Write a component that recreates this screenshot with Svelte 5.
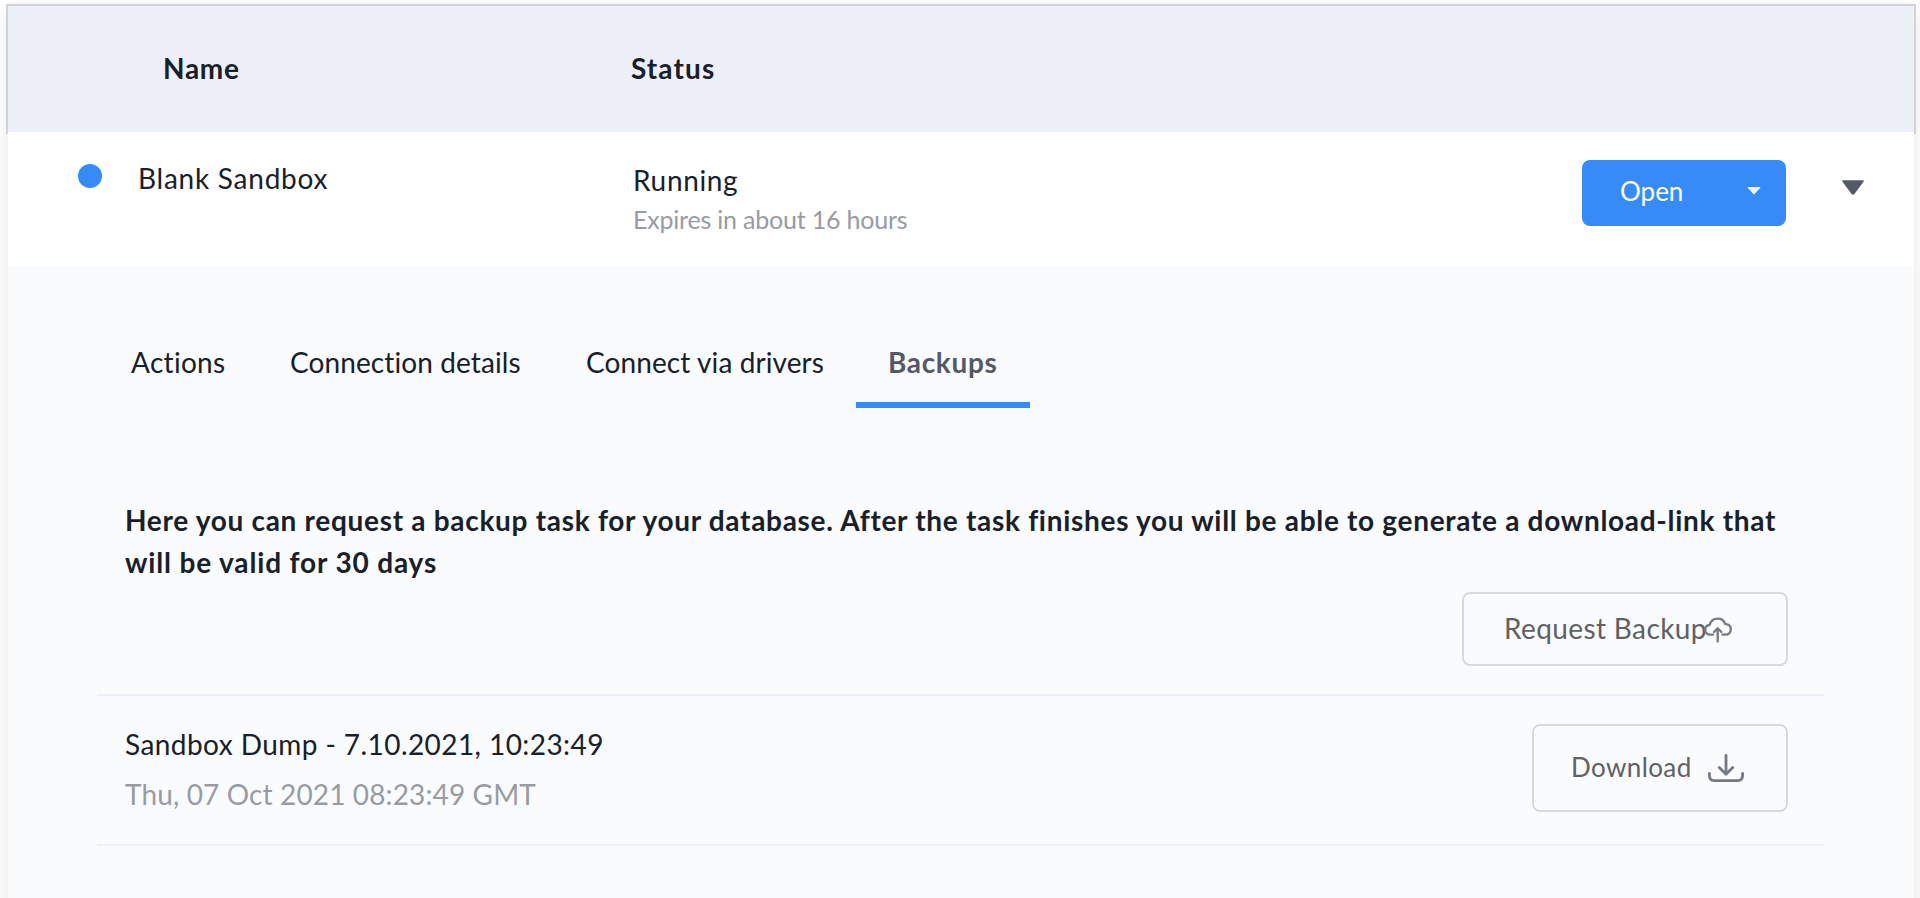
<script>
  const tabs = [
    { label: 'Actions', key: 'actions' },
    { label: 'Connection details', key: 'details' },
    { label: 'Connect via drivers', key: 'drivers' },
    { label: 'Backups', key: 'backups' }
  ];
  let active = $state('backups');
</script>

<main class="card">
  <header class="head">
    <span class="h-name">Name</span>
    <span class="h-status">Status</span>
  </header>

  <section class="row">
    <span class="dot"></span>
    <span class="name">Blank Sandbox</span>
    <div class="status">
      <span class="running">Running</span>
      <span class="expires">Expires in about 16 hours</span>
    </div>
    <button class="open">
      <span>Open</span>
      <svg width="14" height="8" viewBox="0 0 14 8"><path d="M1 .5h12L7 7.2z" fill="#e6f2ff" stroke="#e6f2ff" stroke-linejoin="round" /></svg>
    </button>
    <svg class="toggle" width="22" height="15" viewBox="0 0 22 15"><path d="M1 1h20l-9 12.2q-1 1.2-2 0z" fill="#545965" stroke="#545965" stroke-width="1.6" stroke-linejoin="round" /></svg>
  </section>

  <section class="detail">
    <nav class="tabs">
      {#each tabs as t}
        <button class="tab {t.key}" class:active={active === t.key} onclick={() => (active = t.key)}>{t.label}</button>
      {/each}
    </nav>

    <p class="intro">
      <span>Here you can request a backup task for your database. After the task finishes you will be able to generate a download-link that</span>
      <span class="second">will be valid for 30 days</span>
    </p>

    <div class="request-line">
      <button class="outline request">
        <span>Request Backup</span>
        <svg width="28" height="26" viewBox="0 0 28 26" fill="none" stroke="#747986" stroke-width="2.3" stroke-linecap="round" stroke-linejoin="round">
          <path d="M9 17.7H6.2C3.2 17.7 1.2 15.6 1.2 12.9c0-2.7 1.7-4.7 4.4-4.9C6.6 4.2 9.8 1.6 13.8 1.6c3.6 0 6.2 1.9 7.3 5.2 3.5.3 5.7 2.5 5.7 5.5 0 3.1-2.2 5.4-5.4 5.4H18.5" />
          <path d="M13.7 24.5V11.5M10 15l3.7-3.7L17.4 15" />
        </svg>
      </button>
    </div>

    <div class="backup">
      <div class="info">
        <span class="title">Sandbox Dump - 7.10.2021, 10:23:49</span>
        <span class="date">Thu, 07 Oct 2021 08:23:49 GMT</span>
      </div>
      <button class="outline download">
        <span>Download</span>
        <svg width="36" height="28" viewBox="0 0 36 28" fill="none" stroke="#747986" stroke-width="2.8" stroke-linecap="round" stroke-linejoin="round">
          <path d="M18 1.5V20M11.3 13.5L18 20.2l6.7-6.7" />
          <path d="M1.4 19.5v2.1c0 3 1.7 5 4.8 5h23.6c3.1 0 4.8-2 4.8-5v-2.1" />
        </svg>
      </button>
    </div>
  </section>
</main>

<style>
  :global(body) {
    background: #fff;
    overflow: hidden;
  }
  * {
    box-sizing: border-box;
  }
  button {
    font: inherit;
    color: inherit;
    background: none;
    border: 0;
    padding: 0;
    white-space: nowrap;
    text-align: left;
  }
  svg {
    display: block;
    flex: none;
  }
  .card {
    width: 1906px;
    height: 920px;
    margin: 6px 0 0 8px;
    background: #fafbfd;
    box-shadow: 0 2px 18px rgba(0, 0, 0, 0.1);
    font-family: Lato, 'Noto Sans', sans-serif;
    font-size: 28px;
    line-height: 42px;
    color: #182029;
    white-space: nowrap;
    font-variant-ligatures: none;
  }
  .head {
    height: 126px;
    display: grid;
    grid-template-columns: 468px 1fr;
    padding: 41px 0 0 155px;
    background: #edf0f9;
    font-weight: 700;
    letter-spacing: 0.7px;
    box-shadow: -2px 0 #d3d3d3, 2px 0 #d3d3d3, 0 -2px #d3d3d3, -2px -2px #d3d3d3, 2px -2px #d3d3d3, -2px 2px #d3d3d3, 2px 2px #d3d3d3;
  }
  .h-status {
    letter-spacing: 1.1px;
  }
  .row {
    position: relative;
    height: 134px;
    display: grid;
    grid-template-columns: 60px 495px 949px 260px 22px;
    padding-left: 70px;
    background: #fff;
    align-items: start;
  }
  .dot {
    width: 24px;
    height: 24px;
    margin-top: 32px;
    border-radius: 50%;
    background: #368bf8;
  }
  .name {
    margin-top: 25px;
    letter-spacing: 0.75px;
  }
  .status {
    display: flex;
    flex-direction: column;
    margin-top: 27px;
  }
  .running {
    letter-spacing: 0.65px;
  }
  .expires {
    font-size: 25px;
    line-height: 36px;
    letter-spacing: -0.2px;
    color: #989ba3;
  }
  .open {
    width: 204px;
    height: 66px;
    margin-top: 28px;
    padding: 0 25px 0 38px;
    display: flex;
    align-items: center;
    justify-content: space-between;
    border-radius: 8px;
    background: #368bf8;
    color: #fff;
    font-size: 26px;
  }
  .open span {
    margin-top: -4px;
  }
  .open svg {
    margin-top: -4px;
  }
  .toggle {
    margin-top: 48px;
  }
  .detail {
    height: 660px;
    padding: 75px 90px 0 89px;
  }
  .tabs {
    display: grid;
    grid-template-columns: 159px 296px 270px 174px;
    height: 67px;
    padding-left: 34px;
  }
  .tab {
    display: block;
    height: 67px;
    padding-bottom: 25px;
    letter-spacing: 0.1px;
  }
  .actions {
    letter-spacing: 0.3px;
  }
  .backups {
    padding-left: 32px;
  }
  .active {
    font-weight: 700;
    letter-spacing: 0.65px;
    color: #545965;
    border-bottom: 6px solid #368bf8;
    padding-bottom: 19px;
  }
  .intro {
    display: flex;
    flex-direction: column;
    margin: 91px 0 0 28px;
    font-weight: 700;
    letter-spacing: 0.7px;
  }
  .second {
    letter-spacing: 0.85px;
  }
  .request-line {
    height: 113px;
    padding: 9px 36px 0 0;
    display: flex;
    justify-content: flex-end;
    border-bottom: 2px solid #edf0f7;
  }
  .outline {
    display: flex;
    align-items: center;
    border: 2px solid #d9dadc;
    border-radius: 8px;
    color: #5f6163;
  }
  .request {
    width: 326px;
    height: 74px;
    padding-left: 40px;
    letter-spacing: 0.38px;
  }
  .request span {
    width: 200px;
    margin-top: -2px;
  }
  .request svg {
    margin-top: 1px;
  }
  .backup {
    height: 150px;
    display: flex;
    justify-content: space-between;
    padding: 28px 36px 0 28px;
    border-bottom: 2px solid #edf0f7;
  }
  .info {
    display: flex;
    flex-direction: column;
    gap: 8px;
    margin-top: -1px;
  }
  .title {
    letter-spacing: 0.43px;
  }
  .date {
    letter-spacing: 0.13px;
    color: #989ba3;
  }
  .download {
    width: 256px;
    height: 88px;
    padding-left: 37px;
    font-size: 26px;
    letter-spacing: 0.4px;
  }
  .download span {
    width: 137px;
    margin-top: -2px;
  }
</style>
